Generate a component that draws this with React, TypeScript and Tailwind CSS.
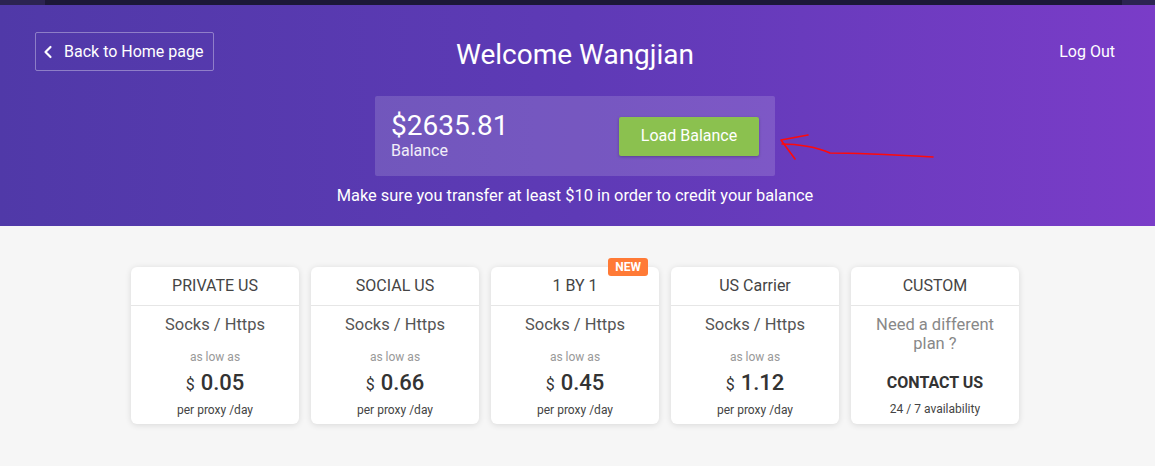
import { ChevronLeft } from "lucide-react";

type Plan = {
  name: string;
  price: string;
  isNew?: boolean;
};

const plans: Plan[] = [
  { name: "PRIVATE US", price: "0.05" },
  { name: "SOCIAL US", price: "0.66" },
  { name: "1 BY 1", price: "0.45", isNew: true },
  { name: "US Carrier", price: "1.12" },
];

function PlanCard({ plan }: { plan: Plan }) {
  return (
    <div className="relative flex h-[157px] w-[168px] flex-col rounded-md bg-white shadow-[0_1px_6px_rgba(0,0,0,0.12)]">
      {plan.isNew && (
        <span className="absolute -top-[9px] right-[11px] rounded-[3px] bg-[#ff7a36] px-[7px] text-[12px] leading-[18px] font-bold text-white">
          NEW
        </span>
      )}
      <div className="flex h-[39px] items-center justify-center border-b border-[#e6e6e6] text-[16px] text-[#444]">
        {plan.name}
      </div>
      <div className="flex flex-col items-center pt-[8px] text-center">
        <div className="text-[16.5px] leading-[22px] text-[#555]">Socks / Https</div>
        <div className="mt-[13px] text-[12px] leading-[16px] text-[#999]">as low as</div>
        <div className="mt-[3px] flex items-baseline gap-[6px] text-[#333]">
          <span className="text-[16px]">$</span>
          <span className="text-[22px] leading-[30px] font-medium">{plan.price}</span>
        </div>
        <div className="mt-[4px] text-[12px] leading-[16px] text-[#444]">per proxy /day</div>
      </div>
    </div>
  );
}

function CustomCard() {
  return (
    <div className="flex h-[157px] w-[168px] flex-col rounded-md bg-white shadow-[0_1px_6px_rgba(0,0,0,0.12)]">
      <div className="flex h-[39px] items-center justify-center border-b border-[#e6e6e6] text-[16px] text-[#444]">
        CUSTOM
      </div>
      <div className="flex flex-col items-center pt-[9px] text-center">
        <div className="text-[16.5px] leading-[19px] text-[#888]">
          Need a different
          <br />
          plan ?
        </div>
        <div className="mt-[20px] text-[16px] leading-[20px] font-bold text-[#333]">CONTACT US</div>
        <div className="mt-[8px] text-[12px] leading-[16px] text-[#444]">24 / 7 availability</div>
      </div>
    </div>
  );
}

// hand-drawn red arrow next to the load button
function Scribble() {
  return (
    <svg
      className="pointer-events-none absolute top-[131px] left-[777px]"
      width="162"
      height="32"
      viewBox="0 0 162 32"
      fill="none"
      stroke="#ff0a0a"
      strokeWidth="1.6"
      strokeLinecap="round"
      strokeLinejoin="round"
    >
      <path d="M31 4 L4 9 L18 28" />
      <path d="M5 13 C20 13 40 16 53 22 C80 22 120 24 156 26" />
    </svg>
  );
}

export default function App() {
  return (
    <div
      className="relative min-h-[466px] bg-[#f6f6f6]"
      style={{ fontFamily: "Roboto, 'Noto Sans', Arial, sans-serif" }}
    >
      <div className="flex h-[5px] bg-[#2c2452]">
        <div className="ml-[45px] mr-[33px] flex-1 bg-[#1c1838]" />
      </div>

      <header className="bg-gradient-to-r from-[#5039a8] via-[#5e3ab6] to-[#7a3cc8] px-[35px] pt-[27px] pb-[18px] text-white">
        <div className="grid h-[39px] grid-cols-[1fr_auto_1fr] items-center">
          <div>
            <button className="flex h-[39px] items-center gap-[6px] rounded-[2px] border border-white/35 pt-[1px] pr-[10px] pl-[2px] text-[16px]">
              <ChevronLeft size={20} strokeWidth={2.6} />
              Back to Home page
            </button>
          </div>
          <h1 className="mr-[5px] pt-[6px] text-[28px] leading-[33px]">Welcome Wangjian</h1>
          <div className="flex justify-end pt-[1px] pr-[5px]">
            <a className="text-[16px]">Log Out</a>
          </div>
        </div>

        <div className="mt-[25px] flex justify-center pr-[5px]">
          <div className="flex h-[80px] w-[400px] items-center justify-between rounded-[2px] bg-white/15 pr-[16px] pl-[16px]">
            <div className="flex flex-col">
              <span className="text-[28px] leading-[30px]">$2635.81</span>
              <span className="text-[16px] leading-[20px] text-white/90">Balance</span>
            </div>
            <button className="h-[39px] w-[140px] rounded-[2px] bg-[#8bc14f] text-[16px] shadow-[0_1px_3px_rgba(0,0,0,0.25)]">
              Load Balance
            </button>
          </div>
        </div>

        <p className="mt-[8px] pr-[5px] text-center text-[16.4px] leading-[24px]">
          Make sure you transfer at least $10 in order to credit your balance
        </p>
      </header>

      <Scribble />

      <main className="flex justify-center gap-3 pt-[41px] pr-[5px]">
        {plans.map((p) => (
          <PlanCard key={p.name} plan={p} />
        ))}
        <CustomCard />
      </main>
    </div>
  );
}
